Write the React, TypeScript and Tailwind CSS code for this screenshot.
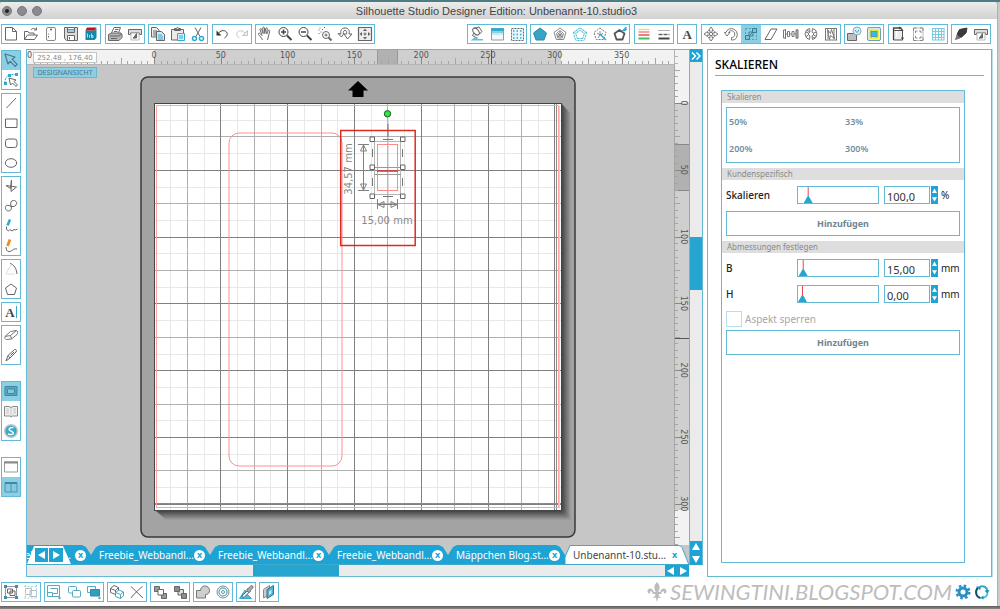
import { useState } from 'react'
import type { ReactNode } from 'react'
import clsx from 'clsx'

const BLUE = '#2fa9d0'
const GREY = '#666666'

// 16x16 drawings, shown at their own size inside 20px cells
const icons: Record<string, ReactNode> = {
  new: <path d="M2.5 1.5h7l4 4v8.5h-11zM9.5 1.5v4h4" fill="#fff" />,
  open: <path d="M1.5 13.5v-8h3.5l1 1.5h5v2M1.5 13.5l3-4.5h10l-3 4.5zM8 4c1-2 4-2 5.5 0M13.5 1.5v2.5h-2.5" />,
  material: (
    <>
      <rect x="3.5" y="1.5" width="9" height="13" rx="1.5" stroke="#8a8a8a" />
      <path d="M8 2.5v2M7 3.5h2M5.5 10v1.5" />
      <circle cx="5.500" cy="8" r=".6" fill={GREY} stroke="none" />
    </>
  ),
  save: (
    <>
      <path d="M1.5 1.5h13v13h-11l-2-2z" fill="#ddd" />
      <path d="M4.5 1.5h7v5h-7z" fill="#fff" />
      <path d="M5 3.5h6M5 5h6" stroke={BLUE} />
      <path d="M4.5 9.5h7v5h-7zM6.5 11v2.5" fill="#fff" />
    </>
  ),
  library: (
    <>
      <path d="M2.5 4.5h9l2-2.5v10l-2 2h-9z" fill="#1787a8" stroke="none" />
      <path d="M4 1.500h9.500l-2 3h-9z" fill="#b5161c" stroke="none" />
      <path d="M4.5 7.5v4M6.5 9v2.5M8.5 7.5v4h1.500v-2h-1.500" stroke="#d5f0f8" strokeWidth=".8" />
    </>
  ),
  print: (
    <>
      <path d="M4.5 7l2.5-5.5h6.5L11.5 7" fill="#fff" />
      <path d="M1.5 8.5l3-1.5h9.5l1 1.5v3l-3 3h-10.5z" fill="#b5b5b5" />
      <path d="M3 10h9l2.5-2M4 12.5h6M8 3.5h3.5M7 5.5h3.5" />
    </>
  ),
  send: (
    <>
      <path d="M1.5 3.5h13v5h-2v-1.5h-9v1.5h-2z" fill="#ddd" />
      <path d="M4 7.5v6.5h8v-6.5" fill="#fff" stroke="#bbb" />
      <path d="M9.5 7.5v4.5h-3zM6 12.5l3-2" fill={GREY} />
    </>
  ),
  copy: (
    <>
      <path d="M1.5 1.5h5l2.5 2.5v7h-7.5zM3 5h4M3 7h4M3 9h4" fill="#eee" />
      <path d="M6.5 5.5h5l3 3v6h-8z" fill="#cfeaf3" />
      <path d="M8 9h4M8 11h5M8 13h5" stroke={BLUE} />
    </>
  ),
  paste: (
    <>
      <path d="M1.5 3.5h12v10.5h-12zM4.5 4.5v-2h2c0-1.5 2-1.5 2 0h2v2z" fill="#ececec" />
      <path d="M7.5 7.5h7v7h-7z" fill="#d8f0f7" stroke={BLUE} />
      <path d="M9 10h4M9 12h4" stroke={BLUE} />
    </>
  ),
  cut: (
    <>
      <path d="M5 1.5l5 9M11 1.5l-5 9" />
      <circle cx="4.5" cy="12.5" r="2" stroke={BLUE} strokeWidth="1.5" />
      <circle cx="11.5" cy="12.5" r="2" stroke={BLUE} strokeWidth="1.5" />
    </>
  ),
  undo: (
    <>
      <path d="M2.500 4.500v5h5z" fill="#333" stroke="none" />
      <path d="M4 8c2-3.500 6-4.500 8.500-2 1.500 2 .5 4.500-2 6" stroke="#444" />
    </>
  ),
  redo: (
    <>
      <path d="M13.500 4.500v5h-5z" fill="#eee" stroke="#c4c4c4" />
      <path d="M11 7c-2-2.500-5.500-3-7.500-1-1.500 2-.5 4.500 2 6" stroke="#c4c4c4" />
    </>
  ),
  hand: <path d="M5.5 14c-1-2.5-3-4-4-5.500-.5-1.5 1-2 2-.5l1.5 1.5-2-6c0-1.2 1.300-1.300 1.700 0l1.5 4-.5-5.500c.2-1.2 1.5-1.2 1.700 0l.4 5.500.9-5.200c.4-1 1.600-.8 1.600.4l-.7 5.300 1.700-3.500c.6-.9 1.700-.3 1.400.8L11.500 10 10.500 14" />,
  zoomIn: (
    <>
      <circle cx="6.5" cy="6" r="4.5" stroke="#444" />
      <path d="M10 9.5l4.5 4.5" stroke="#444" strokeWidth="2" />
      <path d="M4 6h5M6.5 3.5v5" stroke="#444" strokeWidth="1.5" />
    </>
  ),
  zoomOut: (
    <>
      <circle cx="6.5" cy="6" r="4.5" stroke="#444" />
      <path d="M10 9.5l4.5 4.5" stroke="#444" strokeWidth="2" />
      <path d="M4 6h5" stroke="#444" strokeWidth="1.5" />
    </>
  ),
  zoomSel: (
    <>
      <path d="M1.5 4h1M3 1.5v1M5 3.5h1M3.5 6h1M1.5 7.5h1M7 1.5h1" />
      <circle cx="9" cy="9" r="3.5" />
      <path d="M11.5 11.5l3 3" strokeWidth="2" />
      <path d="M7.500 9h3M9 7.500v3" />
    </>
  ),
  zoomDrag: <path d="M4 8C3 4 5 2 8 2s5 2 4 6h3L10.500 13 7 8h2.500c.5-2.500 0-3.500-1.500-3.500S6 5.500 6.500 8L4.500 11 1 7.500z" />,
  fit: (
    <>
      <rect x="1.5" y="1.5" width="13" height="13" fill="#eee" strokeWidth="1.200" />
      <path d="M8 2.5l2 2.500H6zM8 13.500L6 11h4zM2.500 8L5 6v4zM13.500 8L11 6v4z" fill={GREY} stroke="none" />
      <circle cx="8" cy="8" r="1" />
    </>
  ),
  bucket: (
    <>
      <ellipse cx="7" cy="5.500" rx="2.500" ry="4" transform="rotate(-40 7 5.500)" />
      <path d="M5 2.500l5-1.500M10 8.500L13 5.500 10 1M5 7l-1.500 2.500L8 12" />
      <path d="M1.500 14.500l4-3h4l-1.500 1.500h6v1.500z" fill="#5fc1dc" stroke="none" />
    </>
  ),
  gradient: (
    <>
      <rect x="2.500" y="2.500" width="12" height="11.500" fill="#f3fafc" stroke="#999" />
      <rect x="2" y="2" width="13" height="3" fill="#37aacb" stroke="none" />
      <rect x="3" y="5" width="11" height="2" fill="#8acfe2" stroke="none" />
      <rect x="3" y="7" width="11" height="2" fill="#c9e9f2" stroke="none" />
    </>
  ),
  pattern: (
    <>
      <rect x="2.500" y="2.500" width="12" height="12" stroke={GREY} strokeDasharray="2 1" fill="#e6f6fa" />
      <path d="M4 5h10M4 8.500h10M4 12h10" stroke={BLUE} strokeWidth="1.500" strokeDasharray="1.500 2" />
    </>
  ),
  pentaFill: <path d="M8 2l6.500 5-2.500 7H4L1.500 7z" fill="#34a5c5" stroke="#2b8ba8" />,
  pentaSketch: <path d="M8 2l6 4.500-2.300 7H4.300L2 6.500zM8 4.500l3.500 3-1.300 4.500H5.800L4.500 7.500zM6 7l4 4M10 7l-4 4M8 5v7M5 9h6" stroke="#888" />,
  pentaStroke: (
    <>
      <path d="M8 3l5.500 4-2 6.500h-7L2.500 7z" fill="none" stroke="#a5dcea" strokeWidth="3" />
      <path d="M8 3l5.500 4-2 6.500h-7L2.500 7z" stroke="#4db5d2" strokeWidth="3" strokeDasharray="1 2" />
      <path d="M8 3l5.500 4-2 6.500h-7L2.500 7z" stroke="#fff" />
    </>
  ),
  pentaWand: (
    <>
      <path d="M8 2l6 4.500-2.300 7H4.300L2 6.500z" stroke="#777" strokeDasharray="2 1" />
      <path d="M8 5v4M5 7l3 2-2 3M8 9l3-1.500" stroke="#888" />
      <path d="M8 8l6 6" stroke={BLUE} strokeWidth="1.500" />
    </>
  ),
  pentaPen: (
    <>
      <path d="M7.500 4l5 3.500-2 6h-6l-2-6z" stroke="#555" strokeWidth="1.800" />
      <path d="M10 5.500l4.500-4.500M12 5l3-2" stroke={BLUE} strokeWidth="1.500" />
    </>
  ),
  lineColor: (
    <>
      <path d="M2.500 3.500h11" stroke="#f3d48c" strokeWidth="1.500" />
      <path d="M2.500 6h11" stroke="#f08a8a" strokeWidth="1.500" />
      <path d="M2.500 9h11" stroke="#e8505c" strokeWidth="1.500" />
      <path d="M2.500 12.500h11" stroke="#3fc24f" strokeWidth="2" />
    </>
  ),
  lineStyle: (
    <>
      <path d="M2.500 4.500h11" strokeDasharray="1 1" />
      <path d="M2.500 8.500h11" strokeDasharray="4 1" strokeWidth="1.500" />
      <path d="M2.500 12.500h11" stroke="#444" strokeWidth="2" />
    </>
  ),
  move: (
    <>
      <path d="M8 1l2.500 3.500H9v2H7v-2H5.500zM8 15l2.500-3.500H9v-2H7v2H5.500zM1 8l3.500-2.500V7h2v2h-2v1.500zM15 8l-3.500-2.500V7h-2v2h2v1.500z" fill="#fff" stroke="#777" />
    </>
  ),
  rotate: <path d="M1.500 6.500L4 10l3-3.500H5.500C6.500 4 10.500 4 11.500 7s-1 4.500-3 4.500V14c4 .500 6.500-3 5.500-7C12.500 1.500 5 1 3 6.500z" stroke="#777" />,
  scale: (
    <>
      <path d="M2.500 2.500h11v11h-11z" stroke="#5a9cb2" strokeDasharray="2 1.500" />
      <path d="M2.500 9.500h4v4h-4zM9.500 2.500h4v4h-4z" fill="#7fc0d6" stroke="#3b7f97" />
      <path d="M6.500 9.500L9.500 6.500M6 6h4v4H6z" stroke="#3b7f97" />
    </>
  ),
  shear: <path d="M8 3h6L8 13.500H2z" fill="#fff" />,
  align: <path d="M2.500 3v10M14 3v10M.5 4v8h2V4zM13 4v8h2V4zM2.500 8h2M11 8h2M4.500 5.500h2v5h-2zM9 5.500h2v5H9zM6.500 8H9" stroke="#777" />,
  replicate: <path d="M6.500 2.500L3.500 4 2 8l1.500 4 3 1.500L7 10 5 8l2-2zM9.500 2.500l3 1.500L14 8l-1.500 4-3 1.500L9 10l2-2-2-2zM2.500 6l3 1M3 10.500L5.500 9M10.500 7l3-1M10.500 9l3 1.500M4 4.500l2.500 1M9.500 11l2.500 1" stroke="#777" />,
  nest: <path d="M2.500 2v12.500M13.500 2v12.500M2.500 2.500h11M2.500 14h11M5 4v9M11 3v10M4.500 3.500l3 4 1-4 3 9-4-3-1 4z" stroke="#777" />,
  modify: (
    <>
      <path d="M1.500 7.500h9v7h-9z" fill="#bdbdbd" />
      <circle cx="11" cy="5" r="4" fill="#d7f0f8" stroke="#8aa9b3" />
      <path d="M9.500 4c0 3 3 3 3 0" stroke={BLUE} />
    </>
  ),
  offset: (
    <>
      <rect x="1.500" y="1.500" width="13" height="13" rx="1.500" fill="#dfeef3" stroke="#6f9fb0" />
      <rect x="3" y="3" width="10" height="10" fill="#f4ec3c" stroke="none" />
      <path d="M5 5l1.500.5h3L11 5v6l-1.500-.5h-3L5 11z" fill="#49b4d6" stroke="#359cbd" />
    </>
  ),
  page: (
    <>
      <path d="M3.500 4.500h9v9.500h-9z" fill="#ececec" stroke="#555" />
      <path d="M3.500 14V2h7l2.500 3" stroke="#444" strokeWidth="1.300" />
      <path d="M9 .5L12 2 9 3.500zM11 11.500l1.500 3 1.500-3z" fill="#444" stroke="none" />
      <path d="M6.500 5v6" stroke="#fff" />
    </>
  ),
  regMarks: (
    <>
      <rect x="3.500" y="2" width="9.500" height="12.500" rx="1" stroke="#bbb" />
      <path d="M3.500 5V2h3M10 2h3v3M13 11.500v3h-3M6.500 14.500h-3v-3M5.500 7V5h2M9 5h2v2M5.500 10v2h2M11 10v2H9" stroke="#888" />
    </>
  ),
  grid: <path d="M2.500 2v12M5.500 2v12M8.500 2v12M11.500 2v12M14 2v12M2 2.500h12.500M2 5.500h12.500M2 8.500h12.500M2 11.500h12.500M2 14h12.500" stroke="#7acbe2" />,
  blade: (
    <>
      <path d="M6.500 3.500l7.500-1.500-1 5-5 4.500-4-3z" fill="#3a3a3a" stroke="#3a3a3a" />
      <path d="M4 9l-1.500 4.500L7 12z" fill="#777" stroke="#777" />
    </>
  ),
  select: <path d="M2 2l3 10 2.200-2.700 5 5 2-2-5-5L12 5z" stroke="#46788b" strokeWidth="1.200" />,
  editPoints: (
    <>
      <path d="M2 11C1.500 6 4 3 9 2.500h5" stroke={BLUE} strokeDasharray="2 1" />
      <path d="M1 10h3v3H1zM5 2h3v3H5zM12 1h3v3h-3z" fill={BLUE} stroke="none" />
      <path d="M6 6l1.500 7 2-2 3.500 3.500 1.500-1.500L11 9.500 13 8z" fill="#fff" />
    </>
  ),
  line: <path d="M3.500 13L13 3" />,
  rect: <path d="M2.500 4h11.500v8.500h-11.500z" />,
  roundRect: <rect x="2.500" y="4" width="11.500" height="8.500" rx="2.500" />,
  ellipse: <ellipse cx="8" cy="8" rx="5.700" ry="4.300" />,
  polygon: <path d="M8.500 2L7.500 10.500 3 7.500 13.500 9 8 13.500z" />,
  curve: <path d="M8 8C7 5 8 2.500 10.500 2.500c3 0 4 2.500 2.500 4.500S9 9 6 7.500C3 6.500 1.500 9 3 11.500c1 2 4 2 5 0 .5-1 .5-2 0-3.500z" />,
  freehand: (
    <>
      <path d="M7 1.500L4.500 7.500" stroke={BLUE} strokeWidth="2.500" />
      <path d="M3.500 8.500v3l2 1.500 1.500-1.500L9 13l2-1.500 1.500.5 2-1" />
    </>
  ),
  smooth: (
    <>
      <path d="M7 1.500L4.500 8" stroke="#f0892a" strokeWidth="2.800" />
      <path d="M3 9l.5 3c1 2 4 2 5.500.5s3-2 5-1.500" />
    </>
  ),
  arc: (
    <>
      <path d="M7 2.500c4 1 6.500 5 7 10.500" />
      <path d="M3 12.500L8 4M3 13h9" stroke="#ddd" />
    </>
  ),
  pentagon: <path d="M8 3l5.500 4-2 6.500h-7L2.500 7z" />,
  eraser: <path d="M2 9.500L7.500 4.500l6-1c1 0 1.500 3 .5 4L8.500 12l-5 .5c-1.500 0-2-2-1.500-3zM2 9.500l5.500-1 6-5M7.500 8.500l1 3.500" stroke="#777" />,
  knife: <path d="M3 14l2-5.500 6.500-6c1.500-.5 2.500 1 1.500 2.500l-6 6zM5 8.500l2 2.500M7.500 8.500L11 5" />,
  viewPage: (
    <>
      <rect x="2" y="3.500" width="12" height="9" fill="#56a6bf" stroke="#3f88a1" />
      <rect x="4.500" y="6" width="7" height="4.500" fill="#84c9df" stroke="#3f88a1" />
    </>
  ),
  book: (
    <>
      <path d="M8 4.500L6 3.500H1.500V13h5L8 14l1.500-1h5V3.500H10z" fill="#f1f1f1" stroke="#888" />
      <path d="M3 6h3M3 8h3M3 10h3M10 6h3M10 8h3M10 10h3M8 5v8" stroke="#c4c4c4" />
    </>
  ),
  store: (
    <>
      <circle cx="8" cy="8" r="6.300" fill="#36a9cd" stroke="#c4c4c4" strokeWidth="1.400" />
      <path d="M10.500 4.500C7 4 5 6 7 7.500s4.500 1.500 3 3.500c-1.500 1-3.500.5-5 0" stroke="#fff" strokeWidth="1.500" />
    </>
  ),
  single: (
    <>
      <rect x="1.500" y="3" width="13" height="10" fill="#fff" stroke="#999" />
      <path d="M1 3.500h14" stroke="#888" strokeWidth="2" />
    </>
  ),
  split: (
    <>
      <rect x="2" y="3.500" width="12" height="9.500" fill="#84c9df" stroke="#4a93ac" />
      <path d="M2 4h12" stroke="#3f88a1" strokeWidth="2" />
      <path d="M8 5v8" stroke="#4a93ac" />
    </>
  ),
  group: (
    <>
      <path d="M2.500 2.500h11v11h-11z" stroke="#999" />
      <path d="M4.500 5h5v4h-5zM7 7h5v4.500H7z" />
      <path d="M1 1h3v3H1zM12 1h3v3h-3zM1 12h3v3H1zM12 12h3v3h-3z" fill="#3e8fa8" stroke="none" />
    </>
  ),
  ungroup: (
    <>
      <path d="M2.500 4.500h6v6h-6zM7 6.500h6.500v6H7z" stroke="#bbb" />
      <path d="M1 2.500h14M1 14h14M2.500 1v14M13.500 1v14M8 3v10" stroke="#9fd6e6" strokeDasharray="2 1.500" />
    </>
  ),
  selAll: (
    <>
      <path d="M1.500 1.500h12v11h-12z" stroke="#55a9c2" />
      <path d="M1.500 8.500h5v4M4.500 4.500h7v5h-5" stroke="#55a9c2" />
      <circle cx="13.500" cy="14" r="1.200" fill="#55a9c2" stroke="none" />
    </>
  ),
  selNone: (
    <>
      <rect x="2.500" y="2.500" width="8" height="6.500" rx="1" stroke="#55a9c2" />
      <rect x="6.500" y="6.500" width="8" height="6.500" rx="1" fill="#fff" stroke="#55a9c2" />
    </>
  ),
  selInv: (
    <>
      <path d="M1.500 2.500h8v6h-8z" stroke="#55a9c2" />
      <path d="M4.500 5.500h9v6.500h-9z" fill="#2f9fc0" stroke="#2b8ba8" />
      <circle cx="13.500" cy="14" r="1.200" fill="#55a9c2" stroke="none" />
    </>
  ),
  duplicate: (
    <>
      <path d="M1.500 4.500l3.500-3 4.500 2v4l-3 3-5-2zM1.500 4.500l5 2v4M6.500 6.500l3-3" />
      <path d="M6.500 8.500l3.500-2.500 4.500 2v4l-3 2.500-5-2z" fill="#fff" stroke="#4aa7c2" />
      <path d="M6.500 8.500l5 2v4M11.500 10.500l3-2.500" stroke="#4aa7c2" />
    </>
  ),
  remove: <path d="M2 2.500L14 14M13.500 2.500C9 6 5 10 2 14" />,
  front: (
    <>
      <path d="M2.500 2.500h5v5h-5zM9.500 9.500h5v5h-5z" fill="#999" />
      <path d="M6 5.500h5.500v5.500H6z" fill="#fff" />
    </>
  ),
  back: (
    <>
      <path d="M6 5.500h5.500v5.500H6z" fill="#ddd" />
      <path d="M2.500 2.500h5v5h-5zM9.500 9.500h5v5h-5z" fill="#8a8a8a" />
    </>
  ),
  weld: <path d="M1.500 6.500h4c0-6 9-6 9 0 0 3-2 4-4 4v3.500h-9z" fill="#cfcfcf" stroke="#777" />,
  offsetRing: (
    <>
      <circle cx="8" cy="8" r="6" stroke="#888" />
      <circle cx="8" cy="8" r="4" stroke="#5ab9d4" strokeWidth="1.500" />
      <circle cx="8" cy="8" r="1.500" stroke="#888" />
    </>
  ),
  eyedrop: (
    <>
      <path d="M1.500 14.500L7 6l2 4 4.500 4.500z" fill="#5ab9d4" stroke={BLUE} />
      <path d="M3.500 12.500L9 7l2 1.500-5 5z" fill="#e5f4f8" />
      <path d="M9 7V5l2-1c1-2.500 3.500-3 4-1.500s-1 2.500-2 3L12 8l-1 .5z" fill="#aaa" stroke="#777" />
    </>
  ),
  mirror: (
    <>
      <path d="M2.500 5.500l6-4v9l-6 3.500z" fill="#ccc" stroke="#888" />
      <path d="M6 5.500l6.500-4v9L6 14.500z" fill="#4db4d2" stroke="#4a6a75" />
      <path d="M8 7.500l2.500-2v4L8 11z" fill="#bfe5f0" stroke="none" />
    </>
  ),
}

type Tool = { id: string; label: string; active: boolean }
const t = (id: string, label: string, active = false): Tool => ({ id, label, active })

const topLeft: Tool[][] = [
  [t('new', 'Neu'), t('open', 'Öffnen'), t('material', 'Material'), t('save', 'Speichern'), t('library', 'Bibliothek')],
  [t('print', 'Drucken'), t('send', 'An Silhouette senden')],
  [t('copy', 'Kopieren'), t('paste', 'Einfügen'), t('cut', 'Ausschneiden')],
  [t('undo', 'Rückgängig'), t('redo', 'Wiederholen')],
  [t('hand', 'Verschieben'), t('zoomIn', 'Vergrößern'), t('zoomOut', 'Verkleinern'), t('zoomSel', 'Auswahl vergrößern'), t('zoomDrag', 'Zoom ziehen'), t('fit', 'Einpassen')],
]

const topRight: Tool[][] = [
  [t('bucket', 'Füllfarbe'), t('gradient', 'Verlauf'), t('pattern', 'Muster')],
  [t('pentaFill', 'Füllung'), t('pentaSketch', 'Skizze'), t('pentaStroke', 'Strass'), t('pentaWand', 'Nachzeichnen'), t('pentaPen', 'Kontur')],
  [t('lineColor', 'Linienfarbe'), t('lineStyle', 'Linienstil')],
  [t('text', 'Textstil')],
  [t('move', 'Bewegen'), t('rotate', 'Drehen'), t('scale', 'Skalieren', true), t('shear', 'Scheren'), t('align', 'Ausrichten'), t('replicate', 'Replizieren'), t('nest', 'Verschachteln')],
  [t('modify', 'Modifizieren'), t('offset', 'Versatz')],
  [t('page', 'Seite einrichten'), t('regMarks', 'Passermarken'), t('grid', 'Raster')],
  [t('blade', 'Schnittstil'), t('send', 'Schneiden')],
]

const sideTools: Tool[][] = [
  [t('select', 'Auswählen', true), t('editPoints', 'Punkte bearbeiten')],
  [t('line', 'Linie'), t('rect', 'Rechteck'), t('roundRect', 'Abgerundetes Rechteck'), t('ellipse', 'Ellipse')],
  [t('polygon', 'Polygon'), t('curve', 'Kurve'), t('freehand', 'Freihand'), t('smooth', 'Glatte Freihand')],
  [t('arc', 'Bogen'), t('pentagon', 'Regelmäßiges Polygon')],
  [t('textTool', 'Text')],
  [t('eraser', 'Radierer'), t('knife', 'Messer')],
]

const viewTools: Tool[] = [t('viewPage', 'Designansicht', true), t('book', 'Bibliothek'), t('store', 'Store')]
const splitTools: Tool[] = [t('single', 'Eine Ansicht'), t('split', 'Geteilte Ansicht', true)]

const bottomTools: Tool[][] = [
  [t('group', 'Gruppieren'), t('ungroup', 'Gruppierung aufheben')],
  [t('selAll', 'Alles auswählen'), t('selNone', 'Auswahl aufheben'), t('selInv', 'Auswahl umkehren')],
  [t('duplicate', 'Duplizieren'), t('remove', 'Löschen')],
  [t('front', 'Nach vorne'), t('back', 'Nach hinten')],
  [t('weld', 'Verschweißen'), t('offsetRing', 'Versatz')],
  [t('eyedrop', 'Farbe wählen')],
  [t('mirror', 'Spiegeln')],
]

function ToolIcon({ id }: { id: string }) {
  if (id === 'text' || id === 'textTool') {
    return (
      <span className="flex items-center font-['Liberation_Serif',serif] text-[13px] leading-none font-bold text-[#444]">
        A
        {id === 'textTool' && <span className="ml-px h-3 w-px bg-[#2fa9d0]" />}
      </span>
    )
  }
  return (
    <svg width="16" height="16" viewBox="0 0 16 16" fill="none" stroke={GREY} strokeWidth="1" strokeLinejoin="round">
      {icons[id]}
    </svg>
  )
}

function ToolGroup({ tools, vertical = false }: { tools: Tool[]; vertical?: boolean }) {
  return (
    <div className={clsx('flex outline-1 -outline-offset-1 outline-[#62bad6]', vertical && 'w-5 flex-col')}>
      {tools.map((tool) => (
        <button
          key={tool.id}
          type="button"
          aria-label={tool.label}
          className={clsx('flex h-5 w-5 items-center justify-center', tool.active && 'bg-[#8bcfe5]')}
        >
          <ToolIcon id={tool.id} />
        </button>
      ))}
    </div>
  )
}

// 5 mm on screen
const STEP = 6.68
const range = (from: number, to: number) => Array.from({ length: to - from + 1 }, (_, i) => from + i)
const snap = (n: number) => Math.round(n) - 0.5

function TopRuler() {
  return (
    <svg className="block h-[15px] w-full bg-[#f2f2f2]" fontFamily="'DejaVu Sans', sans-serif" fontSize="8" fill="#555">
      <rect x="127" y="0" width="407" height="15" fill="#cfcfcf" />
      <rect x="350" y="0" width="21" height="15" fill="#b1b1b1" />
      <path d="M350.5 0v15M370.5 0v15" stroke="#999" />
      {range(-18, 77).map((i) => (
        <path
          key={i}
          d={`M${snap(128 + i * STEP)} ${i % 10 === 0 ? 7 : i % 5 === 0 ? 8 : 11}V15`}
          stroke={i % 10 === 0 ? '#888' : '#a5a5a5'}
        />
      ))}
      <text x="0" y="8">0</text>
      {range(0, 7).map((i) => (
        <text key={i} x={127 + i * STEP * 10} y="8" textAnchor="middle">
          {i * 50}
        </text>
      ))}
      <path d="M464.5 0v15" stroke="#555" />
      <path d="M0 14.5h648" stroke="#b5b5b5" />
      <rect x="647" y="0" width="15" height="15" fill="#f2f2f2" />
      <path d="M647.5 0v15M647 6.5h4M647 13.5h4" stroke="#b5b5b5" />
    </svg>
  )
}

function SideRuler() {
  return (
    <svg className="block h-full w-[15px] shrink-0 bg-[#f2f2f2]" fontFamily="'DejaVu Sans', sans-serif" fontSize="8" fill="#555">
      <rect x="0" y="38" width="15" height="407" fill="#cfcfcf" />
      <rect x="0" y="79" width="15" height="47" fill="#b1b1b1" />
      <path d="M0 79.5h15M0 125.5h15" stroke="#888" />
      {range(-5, 66).map((i) => (
        <path
          key={i}
          d={`M0 ${snap(39 + i * STEP)}H${i % 10 === 0 ? 8 : i % 5 === 0 ? 6 : 4}`}
          stroke={i % 10 === 0 ? '#888' : '#a5a5a5'}
        />
      ))}
      {range(0, 6).map((i) => (
        <text key={i} transform={`translate(7 ${38 + i * STEP * 10}) rotate(90)`} textAnchor="middle">
          {i * 50}
        </text>
      ))}
      <path d="M0 273.5h15" stroke="#555" />
      <path d="M.5 0v480" stroke="#a5a5a5" />
    </svg>
  )
}

const gridColor = (k: number) => (k % 4 === 0 ? '#808080' : k % 2 === 0 ? '#b0b0b0' : '#e8e8e8')
// light lines first so the dark ones stay unbroken
const gridOrder = [
  ...range(1, 24).filter((k) => k % 2 === 1),
  ...range(1, 24).filter((k) => k % 4 === 2),
  ...range(1, 24).filter((k) => k % 4 === 0),
]

function Canvas() {
  return (
    <svg className="block h-full min-w-0 flex-1 bg-[#c6c6c6]">
      <defs>
        <linearGradient id="shadeRight" x1="0" x2="1" y1="0" y2="0">
          <stop offset="0" stopColor="#3a3a3a" />
          <stop offset="1" stopColor="#a1a1a1" />
        </linearGradient>
        <linearGradient id="shadeBottom" x1="0" x2="0" y1="0" y2="1">
          <stop offset="0" stopColor="#3a3a3a" />
          <stop offset="1" stopColor="#a1a1a1" />
        </linearGradient>
      </defs>
      <g transform="translate(-27 -65)" fill="none">
        <rect x="141" y="77" width="434" height="460" rx="7" fill="#a3a3a3" stroke="#3a3a3a" strokeWidth="1.5" />
        <path d="M358 81l10 9.5h-4.5V97h-11v-6.5H348z" fill="#000" />
        <path d="M561 103l10 11v406l-10-10z" fill="url(#shadeRight)" />
        <path d="M155 510h406l10 10H166z" fill="url(#shadeBottom)" />
        <rect x="154.5" y="103.5" width="407" height="407" fill="#fff" stroke="#444" />
        {gridOrder.map((k) => (
          <path
            key={k}
            d={`M${snap(154.5 + k * 16.7)} 104V510M155 ${snap(104 + k * 16.7)}H561`}
            stroke={gridColor(k)}
          />
        ))}
        <path d="M556.5 104V510M155 503.5H561" stroke="#8a8a8a" />
        <rect x="156.5" y="105.5" width="402" height="402" stroke="#ffa3a3" />
        <path d="M559.5 106V508" stroke="#ffc4c4" />
        <rect x="229" y="133" width="113" height="333" rx="10" stroke="#ff8f8f" />

        {/* selection */}
        <path d="M388 118V203" stroke="#c2c2c2" />
        <path d="M388 124V137" stroke="#777" />
        <rect x="374.5" y="141.5" width="26" height="53" stroke="#b5b5b5" />
        <path d="M374 167.5H401M374 174.5H401" stroke="#999" />
        <rect x="377.5" y="144.5" width="20" height="46" stroke="#ff8a8a" />
        <path d="M377 171H398" stroke="#e03030" strokeWidth="1.5" />
        <path d="M383 139.5H393M383 196.5H393M372.5 149v8M372.5 178v8M402.5 149v8M402.5 178v8" stroke="#777" />
        {[139, 167, 196].map((y) => (
          <path key={y} d={`M370 ${y - 2}h4.5v4.5H370zM400.5 ${y - 2}h4.5v4.5h-4.5z`} fill="#fff" stroke="#666" />
        ))}
        <circle cx="387.5" cy="113.8" r="3.2" fill="#2be83c" stroke="#1c5c22" />
        <path
          d="M358 144.5h11M358 190.5h11M363.5 145V190M363.5 145l-3 6h6zM363.5 190l-3-6h6zM377.5 199v10M397.5 199v10M378 204.5H397M378 204.5l6-3v6zM397 204.5l-6-3v6z"
          stroke="#808080"
        />
        <rect x="340.7" y="130.5" width="74.5" height="115" stroke="#df2a20" strokeWidth="1.5" />
        <g fontFamily="'DejaVu Sans', sans-serif" fontSize="10" fill="#888" textAnchor="middle">
          <text x="387" y="224">15,00 mm</text>
          <text transform="translate(352 169) rotate(-90)">34,57 mm</text>
        </g>
      </g>
    </svg>
  )
}

function Triangle({ dir }: { dir: 'up' | 'down' | 'left' | 'right' }) {
  const paths = { up: 'M4 0l4 7H0z', down: 'M4 8L0 1h8z', left: 'M0 4l7-4v8z', right: 'M8 4L1 0v8z' }
  return (
    <svg className="h-full max-h-2 w-full max-w-2" viewBox="0 0 8 8" fill="#fff">
      <path d={paths[dir]} />
    </svg>
  )
}

function CloseTab() {
  return (
    <button
      type="button"
      aria-label="Schließen"
      className="flex h-[11px] w-[11px] shrink-0 items-center justify-center rounded-full bg-white text-[9px] leading-none font-bold text-[#1ea4d4]"
    >
      <span className="pb-px">x</span>
    </button>
  )
}

function DocumentTab({ name, width }: { name: string; width: string }) {
  return (
    <div
      className={clsx(
        'flex h-5 items-center justify-between bg-[#1ea4d4] pr-[5px] pl-2',
        '[clip-path:polygon(0_100%,0_10px,5px_2px,9px_0,calc(100%-9px)_0,calc(100%-5px)_2px,100%_10px,100%_100%)]',
        width,
      )}
    >
      <button type="button">{name}</button>
      <CloseTab />
    </div>
  )
}

function DocumentTabs() {
  return (
    <div className="relative flex h-5 shrink-0 bg-[#c6c6c6] text-[10px] leading-5 text-white">
      <div className="flex h-5 w-16 items-center justify-end gap-1 overflow-hidden bg-[#1ea4d4] pr-[5px] [clip-path:polygon(0_0,calc(100%-9px)_0,calc(100%-5px)_2px,100%_10px,100%_100%,0_100%)]">
        <span>Freebie_Webbandl...</span>
        <CloseTab />
      </div>
      <div className="absolute top-px left-0 flex h-[18px] w-11 justify-center bg-white py-[2px] [clip-path:polygon(7px_0,36px_0,44px_100%,0_100%)]">
        <button type="button" aria-label="Vorheriger Tab" className="flex w-[14px] items-center justify-center border-r border-white bg-[#1ea4d4]">
          <Triangle dir="left" />
        </button>
        <button type="button" aria-label="Nächster Tab" className="flex w-[14px] items-center justify-center bg-[#1ea4d4]">
          <Triangle dir="right" />
        </button>
      </div>
      <DocumentTab name="Freebie_Webbandl..." width="w-[119px]" />
      <DocumentTab name="Freebie_Webbandl..." width="w-[119px]" />
      <DocumentTab name="Freebie_Webbandl..." width="w-[119px]" />
      <DocumentTab name="Mäppchen Blog.st..." width="w-[117px]" />
      <div className="relative flex flex-1 items-center justify-between pr-[9px] pl-2 text-[#444]">
        <svg className="absolute inset-0 h-5 w-full" viewBox="0 0 124 20" preserveAspectRatio="none">
          <path d="M0 20V12L5 .5H113q3 0 4 2L124 20z" fill="#fff" stroke="#3fa9cc" />
        </svg>
        <button type="button" className="relative">Unbenannt-10.stu...</button>
        <span className="relative flex">
          <CloseTab />
        </span>
      </div>
      <div className="absolute inset-x-0 bottom-0 h-px bg-[#3fa9cc]" />
    </div>
  )
}

function HorizontalScroll() {
  return (
    <div className="flex h-3 shrink-0 border-b border-[#62bad6] bg-[#ebebeb]">
      <div className="flex flex-1">
        <div className="ml-[226px] w-[86px] bg-[#27a5d1]" />
      </div>
      <div className="flex w-6 bg-[#1ea4d4]">
        <button type="button" aria-label="Nach links" className="flex flex-1 items-center justify-center"><Triangle dir="left" /></button>
        <button type="button" aria-label="Nach rechts" className="flex flex-1 items-center justify-center"><Triangle dir="right" /></button>
      </div>
    </div>
  )
}

function VerticalScroll() {
  return (
    <div className="mr-1 mb-3 flex w-[14px] shrink-0 flex-col border-x border-x-[#62bad6] bg-[#ebebeb]">
      <button type="button" aria-label="Bereich ausblenden" className="flex h-[13px] items-center justify-center bg-[#1ea4d4]">
        <svg width="10" height="8" viewBox="0 0 10 8" fill="none" stroke="#fff" strokeWidth="1.5">
          <path d="M1 .5L4.500 4 1 7.500M5.500 .5L9 4 5.500 7.500" />
        </svg>
      </button>
      <div className="flex flex-1 flex-col">
        <div className="mt-[175px] h-[53px] bg-[#27a5d1]" />
      </div>
      <button type="button" aria-label="Nach oben" className="flex h-3 items-center justify-center bg-[#1ea4d4]"><Triangle dir="up" /></button>
      <button type="button" aria-label="Nach unten" className="flex h-3 items-center justify-center bg-[#1ea4d4]"><Triangle dir="down" /></button>
    </div>
  )
}

function SectionTitle({ children }: { children: ReactNode }) {
  return <h2 className="h-3 bg-[#dedede] px-[5px] text-[8px] leading-[11px] text-[#8a8a8a]">{children}</h2>
}

interface SizeRowProps {
  id: string
  label: string
  unit: string
  value: string
  level: number
}

function SizeRow({ id, label, unit, value, level }: SizeRowProps) {
  const [text, setText] = useState(value)
  const [slide, setSlide] = useState(level)
  return (
    <div className="flex h-[18px] items-center px-1 text-[10px] text-[#222]">
      <label htmlFor={id} className="flex-1 font-medium">{label}</label>
      <input
        type="range"
        aria-label={label}
        min={0}
        max={100}
        value={slide}
        onChange={(e) => setSlide(Number(e.target.value))}
        className="h-[18px] w-[82px] appearance-none border border-[#62bad6] bg-white [&::-webkit-slider-thumb]:h-4 [&::-webkit-slider-thumb]:w-[9px] [&::-webkit-slider-thumb]:appearance-none [&::-webkit-slider-thumb]:bg-[linear-gradient(#f0434d_9px,#27a5d1_9px)] [&::-webkit-slider-thumb]:[clip-path:polygon(4px_0,5px_0,5px_9px,9px_16px,0_16px,4px_9px)]"
      />
      <input
        id={id}
        type="text"
        value={text}
        onChange={(e) => setText(e.target.value)}
        className="ml-[5px] h-[18px] w-[46px] border border-[#62bad6] bg-white pt-[2px] pl-[2px] text-[11px] leading-[14px] text-[#333] outline-none"
      />
      <div className="ml-px flex h-[18px] w-[7px] flex-col bg-[#1ea4d4] p-px">
        <button type="button" aria-label={`${label} erhöhen`} className="flex flex-1 items-center"><Triangle dir="up" /></button>
        <button type="button" aria-label={`${label} verringern`} className="flex flex-1 items-center"><Triangle dir="down" /></button>
      </div>
      <span className="w-[22px] pl-[3px]">{unit}</span>
    </div>
  )
}

function ApplyButton() {
  return (
    <button type="button" className="mx-1 h-[25px] border border-[#62bad6] bg-white text-[9px] font-bold text-[#71858f]">
      Hinzufügen
    </button>
  )
}

function ScalePanel() {
  return (
    <aside className="flex w-[285px] shrink-0 flex-col border border-[#62bad6] px-[7px] shadow-[1px_0_0_#b5dfec]">
      <h1 className="border-b border-[#62bad6] pt-[6px] pb-[2px] text-[12px] leading-[17px] font-medium text-black">
        SKALIEREN
      </h1>
      <div className="mt-[14px] mr-[19px] mb-[13px] ml-[6px] flex flex-1 flex-col border border-[#62bad6]">
        <SectionTitle>Skalieren</SectionTitle>
        <div className="mx-1 mt-1 mb-[5px] grid h-14 grid-cols-2 border border-[#62bad6] text-[9px] font-semibold text-[#71909f]">
          {['50%', '33%', '200%', '300%'].map((p) => (
            <button key={p} type="button" className="px-[2px] text-left">{p}</button>
          ))}
        </div>
        <SectionTitle>Kundenspezifisch</SectionTitle>
        <div className="flex flex-col gap-[7px] pt-[6px] pb-[5px]">
          <SizeRow id="scale" label="Skalieren" unit="%" value="100,0" level={8} />
          <ApplyButton />
        </div>
        <SectionTitle>Abmessungen festlegen</SectionTitle>
        <div className="flex flex-col gap-2 pt-[6px]">
          <SizeRow id="width" label="B" unit="mm" value="15,00" level={1} />
          <SizeRow id="height" label="H" unit="mm" value="0,00" level={0} />
          <label className="flex h-4 items-center gap-[3px] px-1 text-[10px] text-[#a8a8a8]">
            <input type="checkbox" disabled className="h-4 w-4 appearance-none border border-[#b5dfec] bg-white" />
            Aspekt sperren
          </label>
        </div>
        <div className="flex flex-col pt-[3px]">
          <ApplyButton />
        </div>
      </div>
    </aside>
  )
}

function Footer() {
  return (
    <footer className="flex h-[29px] shrink-0 items-center justify-between pr-[7px] pl-px">
      <div className="flex gap-[3px]">
        {bottomTools.map((tools) => (
          <ToolGroup key={tools[0].id} tools={tools} />
        ))}
      </div>
      <div className="flex items-center gap-[3px]">
        <svg width="20" height="20" viewBox="0 0 20 20" fill="#bcbcbc">
          <path d="M10 0c3 3 3.500 6 1.200 10h2c.3-4 5.800-5 6.300-1 .2 2-1.500 3-2.800 2 1-1.200-.5-2.500-1.700-1.200-.6.700-.7 1.500-.5 2.200h-3c.2 2 1.200 3 2.300 3.500-1 .8-2 .5-2.600 0L10 20l-1.200-4.500c-.6.500-1.600.8-2.600 0 1.100-.5 2.100-1.500 2.300-3.500h-3c.2-.7.100-1.500-.5-2.200-1.200-1.300-2.700 0-1.700 1.200C2 12 .3 11 .5 9c.5-4 6-3 6.300 1h2C6.500 6 7 3 10 0z" />
        </svg>
        <a href="#blog" className="font-['Lato',sans-serif] text-[22px] leading-5 text-[#bdbdbd] italic">
          SEWINGTINI.BLOGSPOT.COM
        </a>
        <button type="button" aria-label="Einstellungen">
          <svg width="16" height="16" viewBox="0 0 16 16" fill="none" stroke="#2b8fc4">
            <circle cx="8" cy="8" r="4" strokeWidth="3" />
            <circle cx="8" cy="8" r="6.300" strokeWidth="2.500" strokeDasharray="2.500 2.448" />
          </svg>
        </button>
        <button type="button" aria-label="Aktualisieren">
          <svg width="16" height="16" viewBox="0 0 16 16" fill="none" strokeWidth="2">
            <path d="M6.500 14C2 13 .5 7.500 4 3.500" stroke="#14506a" />
            <path d="M5.500 3C9 1 13 3 13.500 7" stroke="#2fa9d0" />
            <path d="M13.500 9.500c-.5 2.500-2.500 4-5 4.500" stroke="#5cc3df" />
            <path d="M2 2.500h4.500v4zM15.500 6l-2 4-3-3.500zM9.500 11.500v4L6 14z" fill="#2b8fb4" stroke="none" />
          </svg>
        </button>
      </div>
    </footer>
  )
}

export default function App() {
  return (
    <div className="flex h-screen flex-col bg-[#7b7a77] font-['Noto_Sans',sans-serif]">
      <div className="h-[2px] shrink-0 bg-[#4d7c82]" />
      <div className="flex min-h-0 flex-1 bg-[#cbcbcb]">
        <div className="flex min-w-0 flex-1 flex-col rounded-t-[4px] bg-white">
          <header className="flex h-[17px] shrink-0 items-center rounded-t-[4px] bg-linear-to-b from-[#ececec] to-[#d2d2d2] pl-[2px]">
            <div className="flex w-16 gap-[5px]">
              <button type="button" aria-label="Fenster schließen" className="flex h-[10px] w-[10px] items-center justify-center rounded-full border border-[#777] bg-[#8c8a8f]">
                <span className="h-1 w-1 rounded-full bg-[#222]" />
              </button>
              <button type="button" aria-label="Minimieren" className="h-[10px] w-[10px] rounded-full border border-[#7b7b7b] bg-[#8c8a8f]" />
              <button type="button" aria-label="Maximieren" className="h-[10px] w-[10px] rounded-full border border-[#7b7b7b] bg-[#8c8a8f]" />
            </div>
            <div className="flex-1 pr-[70px] text-center font-['Liberation_Sans',sans-serif] text-[11px] leading-4 text-[#444]">
              Silhouette Studio Designer Edition: Unbenannt-10.studio3
            </div>
          </header>

          <nav className="flex h-[30px] shrink-0 items-center justify-between pr-[6px] pl-px">
            <div className="flex w-[374px] justify-between">
              {topLeft.map((tools) => (
                <ToolGroup key={tools[0].id} tools={tools} />
              ))}
            </div>
            <div className="flex w-[524px] justify-between">
              {topRight.map((tools) => (
                <ToolGroup key={tools[0].id} tools={tools} />
              ))}
            </div>
          </nav>

          <main className="flex min-h-0 flex-1 pr-[5px]">
            <div className="flex w-[25px] shrink-0 flex-col gap-[3px] pt-px pl-px">
              {sideTools.map((tools) => (
                <ToolGroup key={tools[0].id} tools={tools} vertical />
              ))}
              <div className="pt-[13px]">
                <ToolGroup tools={viewTools} vertical />
              </div>
              <div className="pt-[13px]">
                <ToolGroup tools={splitTools} vertical />
              </div>
            </div>

            <section className="relative ml-px flex min-w-0 flex-1 flex-col border-t border-l border-[#62bad6]">
              <TopRuler />
              <div className="flex min-h-0 flex-1">
                <Canvas />
                <SideRuler />
              </div>
              <DocumentTabs />
              <HorizontalScroll />
              <div className="absolute top-[2px] left-[6px] h-[11px] w-16 border border-[#c4c4c4] bg-white text-center font-['DejaVu_Sans',sans-serif] text-[7px] leading-[10px] whitespace-nowrap text-[#888]">
                252,48 , 176,40
              </div>
              <div className="absolute top-[17px] left-[6px] h-[11px] w-16 border border-[#6fb6cc] bg-[#8bcfe5] text-center text-[7px] leading-[9px] text-[#4d7685]">
                DESIGNANSICHT
              </div>
            </section>

            <VerticalScroll />
            <ScalePanel />
          </main>

          <Footer />
        </div>
        <div className="w-[3px] shrink-0 border-l border-[#b0b0b0]" />
      </div>
      <div className="h-[3px] shrink-0 bg-linear-to-b from-[#5d5d5b] to-[#8b8a86]" />
    </div>
  )
}
